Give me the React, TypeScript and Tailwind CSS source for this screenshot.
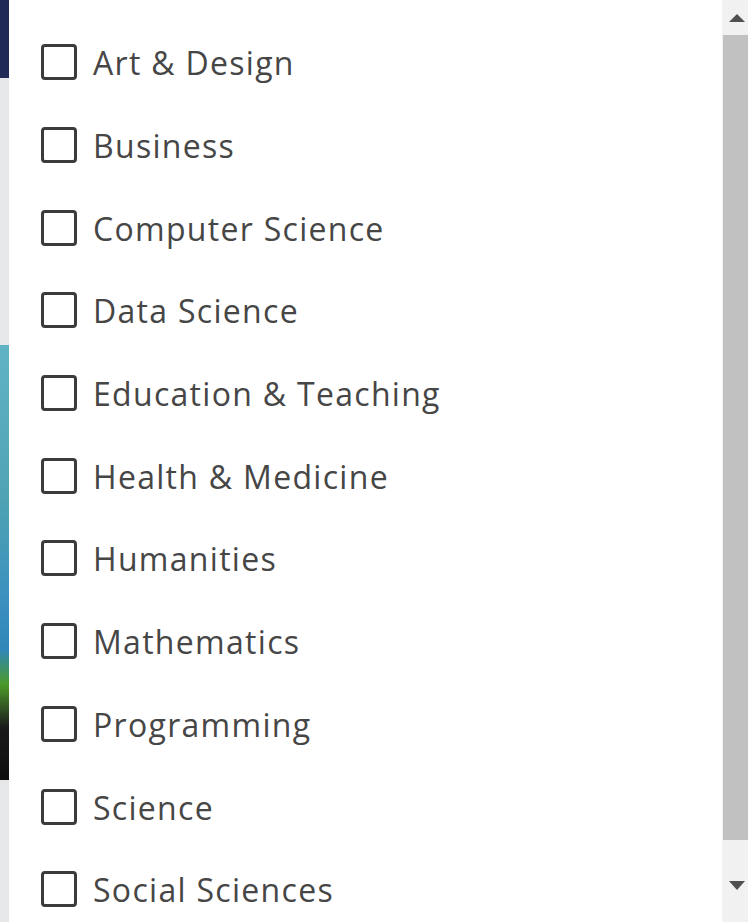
import React from "react";

const categories = [
  "Art & Design",
  "Business",
  "Computer Science",
  "Data Science",
  "Education & Teaching",
  "Health & Medicine",
  "Humanities",
  "Mathematics",
  "Programming",
  "Science",
  "Social Sciences",
];

const App = () => {
  return (
    <div className="flex h-[922px] w-[748px] overflow-hidden bg-white font-['Open_Sans',sans-serif]">
      {/* page behind the dropdown */}
      <div className="flex w-[9px] shrink-0 flex-col">
        <div className="h-[78px] bg-[#1f2a56]"></div>
        <div className="h-[267px] bg-[#e6e7e9]"></div>
        <div className="h-[435px] bg-[linear-gradient(to_bottom,#5fb3c4_0%,#4fa3b2_35%,#3a8fc0_60%,#2f86b8_70%,#4c9a2a_78%,#1a1a1a_88%,#0e0e0e_100%)]"></div>
        <div className="flex-1 bg-[#e6e7e9]"></div>
      </div>

      <div className="flex flex-1 flex-col">
        <div className="h-[3px] bg-[#1f2a56]"></div>
        <div className="flex flex-1">
          <ul className="flex-1 pt-[21px]">
            {categories.map((c) => (
              <li key={c} className="flex h-[82.7px] items-center pl-[32px]">
                <span className="h-[36px] w-[36px] shrink-0 rounded-[4px] border-[3px] border-[#3b3b3b] bg-white"></span>
                <span className="ml-[16px] pt-[2px] text-[32px] leading-none tracking-[1.3px] text-[#464646]">{c}</span>
              </li>
            ))}
          </ul>

          <div className="flex w-[26px] shrink-0 flex-col bg-[#f1f1f1]">
            <div className="flex h-[35px] items-center justify-center pl-[4px]">
              <svg width="16" height="8" viewBox="0 0 16 8">
                <polygon points="0,8 8,0 16,8" fill="#505050" />
              </svg>
            </div>
            <div className="ml-[1px] h-[805px] bg-[#c1c1c1]"></div>
            <div className="flex flex-1 items-center justify-center pl-[4px]">
              <svg width="16" height="9" viewBox="0 0 16 9">
                <polygon points="0,0 16,0 8,9" fill="#505050" />
              </svg>
            </div>
          </div>
        </div>
      </div>
    </div>
  );
};

export default App;
